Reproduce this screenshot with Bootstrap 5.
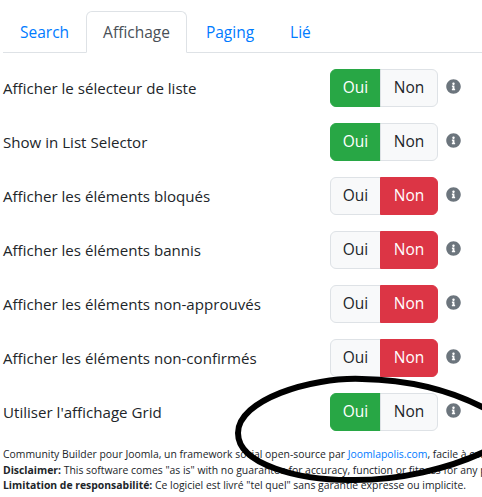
<!DOCTYPE html>
<html lang="fr">
<head>
<meta charset="UTF-8">
<meta name="viewport" content="width=device-width, initial-scale=1">
<title>Affichage</title>
<link href="https://cdn.jsdelivr.net/npm/bootstrap@5.3.3/dist/css/bootstrap.min.css" rel="stylesheet">
<style>
body { font-family: "Open Sans", "Liberation Sans", sans-serif; color: #212529; overflow: hidden; width: 482px; height: 497px; position: relative; font-size: 15.1px; }
.page-wrap { padding: 11px 0 0 3px; width: 482px; overflow: hidden; }
.nav-tabs { width: 479px; border-bottom-color: #dee2e6; margin-bottom: 16px; }
.nav-tabs .nav-link { color: #007bff; padding: 9px 16px 5px; height: 42px; font-size: 15.5px; }
.nav-tabs .nav-link.active { color: #495057; }
.nav-tabs .nav-item:nth-child(n+3) { margin-left: 2px; }
.opt-row { width: 479px; height: 38px; margin-bottom: 16px; }
.opt-label { width: 327px; }
.toggle-btn { height: 38px; padding: 0; font-size: 15.5px; color: #212529; background: #f8f9fa; border-color: #dee2e6; }
.toggle-oui { width: 51px; }
.toggle-non { width: 58px; }
.toggle-btn.is-yes { background: #28a745; border-color: #28a745; color: #fff; }
.toggle-btn.is-no { background: #dc3545; border-color: #dc3545; color: #fff; }
.info-icon { width: 15px; height: 15px; fill: #6c757d; margin-left: 8px; margin-top: -3px; }
.foot-text { font-size: 10.4px; line-height: 15.5px; white-space: nowrap; margin-top: 2px; }
.foot-text a { color: #007bff; text-decoration: none; }
.scribble { position: absolute; left: 0; top: 0; }
</style>
</head>

<body>
<div class="page-wrap">
  <ul class="nav nav-tabs">
    <li class="nav-item"><a class="nav-link" href="#">Search</a></li>
    <li class="nav-item"><a class="nav-link active" href="#">Affichage</a></li>
    <li class="nav-item"><a class="nav-link" href="#">Paging</a></li>
    <li class="nav-item"><a class="nav-link" href="#">Lié</a></li>
  </ul>

  <div id="rows"></div>

  <div class="foot-text">
    <div>Community Builder pour Joomla, un framework social open-source par <a href="#">Joomlapolis.com</a>, facile à configurer</div>
    <div><strong>Disclaimer:</strong> This software comes "as is" with no guarantee for accuracy, function or fitness for any purpose.</div>
    <div><strong>Limitation de responsabilité:</strong> Ce logiciel est livré "tel quel" sans garantie expresse ou implicite.</div>
  </div>
</div>

<svg class="scribble" width="482" height="497" viewBox="0 0 482 497">
  <path d="M484 408C450 390 410 380 362 379C310 377 238 400 238 433C238 465 300 480 349 480C400 481 450 468 484 452" fill="none" stroke="#000" stroke-width="6" stroke-linecap="round"/>
</svg>

<script>
const rows = [
  ["Afficher le sélecteur de liste", 1],
  ["Show in List Selector", 1],
  ["Afficher les éléments bloqués", 0],
  ["Afficher les éléments bannis", 0],
  ["Afficher les éléments non-approuvés", 0],
  ["Afficher les éléments non-confirmés", 0],
  ["Utiliser l'affichage Grid", 1]
];
const info = `<svg class="info-icon" viewBox="0 0 512 512"><path d="M256 8C119.043 8 8 119.083 8 256c0 136.997 111.043 248 248 248s248-111.003 248-248C504 119.083 392.957 8 256 8zm0 110c23.196 0 42 18.804 42 42s-18.804 42-42 42-42-18.804-42-42 18.804-42 42-42zm56 254c0 6.627-5.373 12-12 12h-88c-6.627 0-12-5.373-12-12v-24c0-6.627 5.373-12 12-12h12v-64h-12c-6.627 0-12-5.373-12-12v-24c0-6.627 5.373-12 12-12h64c6.627 0 12 5.373 12 12v100h12c6.627 0 12 5.373 12 12v24z"/></svg>`;
document.getElementById("rows").innerHTML = rows.map(([label, on]) => `
  <div class="opt-row d-flex align-items-center">
    <div class="opt-label">${label}</div>
    <div class="btn-group">
      <button type="button" class="btn toggle-btn toggle-oui ${on ? "is-yes" : ""}">Oui</button>
      <button type="button" class="btn toggle-btn toggle-non ${on ? "" : "is-no"}">Non</button>
    </div>
    ${info}
  </div>`).join("");
</script>
</body>
</html>
